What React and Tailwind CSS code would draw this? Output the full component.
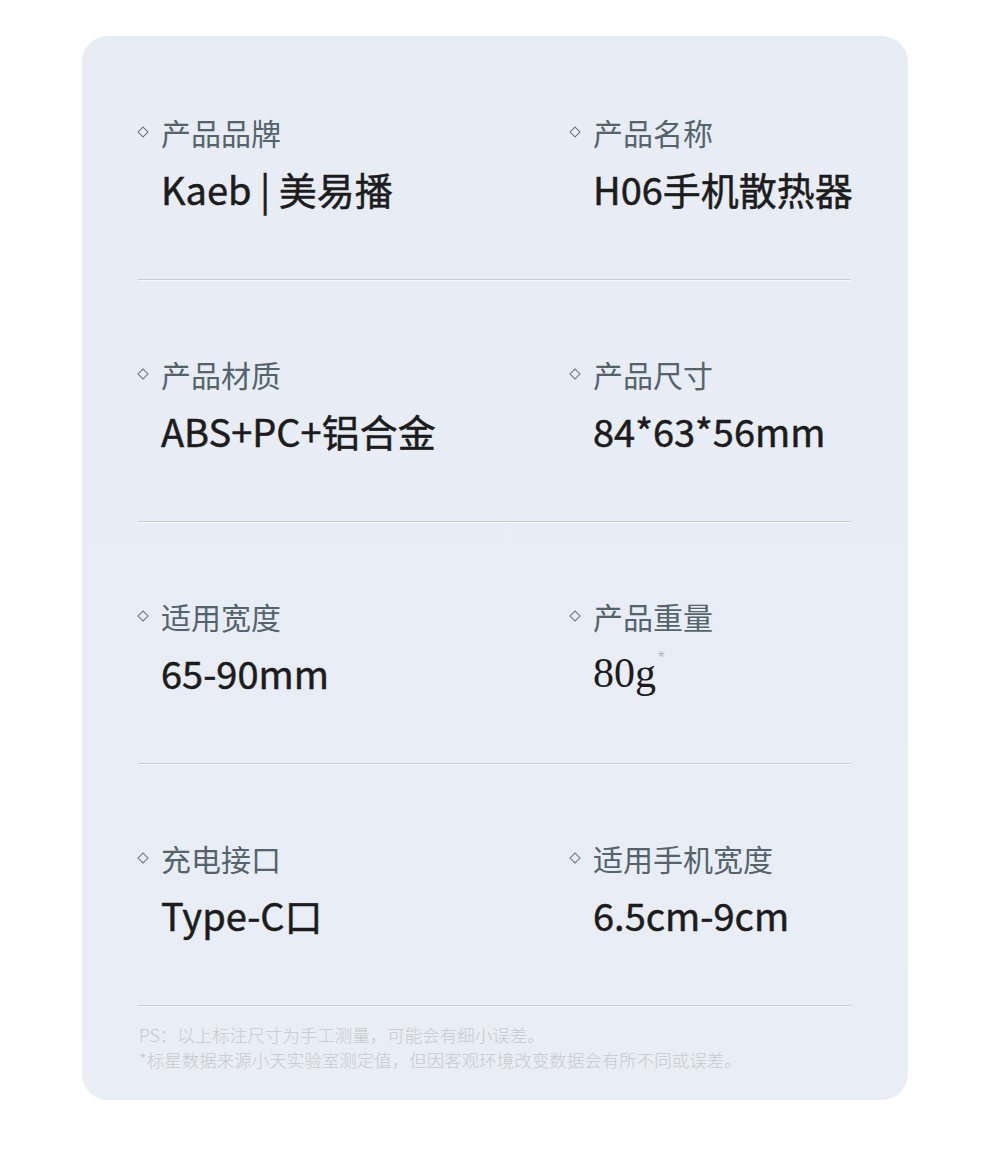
import React from "react";

const rows = [
  [
    { label: "产品品牌", value: "Kaeb | 美易播" },
    { label: "产品名称", value: "H06手机散热器" },
  ],
  [
    { label: "产品材质", value: "ABS+PC+铝合金" },
    { label: "产品尺寸", value: "84*63*56mm" },
  ],
  [
    { label: "适用宽度", value: "65-90mm" },
    { label: "产品重量", value: "80g", star: true },
  ],
  [
    { label: "充电接口", value: "Type-C口" },
    { label: "适用手机宽度", value: "6.5cm-9cm" },
  ],
];

const Spec = ({ item }) => (
  <div className="flex flex-col">
    <div className="flex items-center h-[34px]">
      <span className="w-[8px] h-[8px] border border-[#6b7379] rotate-45 ml-[1px] mr-[14px]" />
      <span className="text-[30px] leading-[34px] text-[#55646b]">{item.label}</span>
    </div>
    <div className="mt-[17px] pl-[23px] h-[46px] flex items-center">
      {item.star ? (
        <span className="relative text-[42px] leading-[46px] text-[#1c1c1c] font-['Liberation_Serif',serif]">
          80g
          <span className="absolute -right-[9px] top-[0px] text-[13px] leading-none text-[#b0b4b9] font-['Noto_Sans',sans-serif]">
            *
          </span>
        </span>
      ) : (
        <span className="text-[38px] leading-[46px] text-[#1c1c1c] whitespace-nowrap [-webkit-text-stroke:0.5px_#1c1c1c]">
          {item.value}
        </span>
      )}
    </div>
  </div>
);

export default function App() {
  return (
    <div className="w-[990px] min-h-[1163px] bg-white pt-[36px] font-['Noto_Sans_CJK_SC','Noto_Sans',sans-serif]">
      <div className="ml-[82px] w-[826px] h-[1064px] rounded-[26px] bg-gradient-to-b from-[#e8ecf4] to-[#e9edf5] pl-[56px] pr-[57px] pt-[2px]">
        {rows.map((row, i) => (
          <div
            key={i}
            className="grid grid-cols-[432px_1fr] pt-[77px] pb-[67px] border-b border-[#c9cdd3] shadow-[0_1px_0_#f6f8fb]"
          >
            <Spec item={row[0]} />
            <Spec item={row[1]} />
          </div>
        ))}
        <div className="mt-[16px] text-[17.5px] leading-[25px] font-light text-[#c6cad1] pl-[1px]">
          <p>PS：以上标注尺寸为手工测量，可能会有细小误差。</p>
          <p>*标星数据来源小天实验室测定值，但因客观环境改变数据会有所不同或误差。</p>
        </div>
      </div>
    </div>
  );
}
